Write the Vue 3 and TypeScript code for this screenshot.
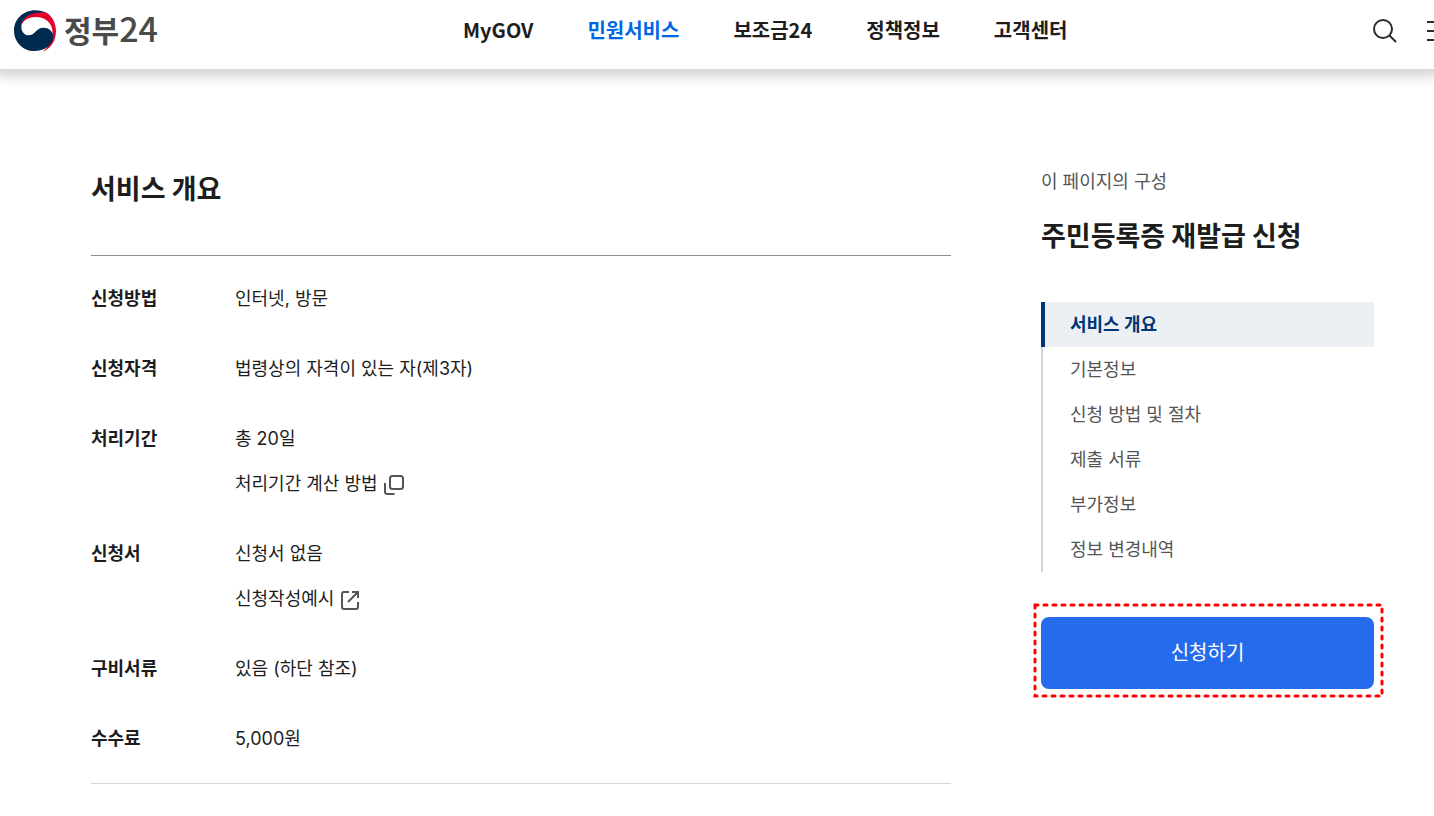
<script setup lang="ts">
interface DetailLink {
  label: string
  icon: 'popup' | 'external'
}

interface Detail {
  term: string
  text: string
  link?: DetailLink
}

const menus: { label: string; current: boolean }[] = [
  { label: 'MyGOV', current: false },
  { label: '민원서비스', current: true },
  { label: '보조금24', current: false },
  { label: '정책정보', current: false },
  { label: '고객센터', current: false },
]

const details: Detail[] = [
  { term: '신청방법', text: '인터넷, 방문' },
  { term: '신청자격', text: '법령상의 자격이 있는 자(제3자)' },
  { term: '처리기간', text: '총 20일', link: { label: '처리기간 계산 방법', icon: 'popup' } },
  { term: '신청서', text: '신청서 없음', link: { label: '신청작성예시', icon: 'external' } },
  { term: '구비서류', text: '있음 (하단 참조)' },
  { term: '수수료', text: '5,000원' },
]

const sections: string[] = ['서비스 개요', '기본정보', '신청 방법 및 절차', '제출 서류', '부가정보', '정보 변경내역']
</script>

<template>
  <div class="page">
    <header class="header">
      <div class="header-inner">
        <a class="logo" href="#">
          <svg class="emblem" viewBox="42 30 126 124" aria-hidden="true">
            <path fill="#e4002b" d="M64 76C66 50 88 34 112 34C120 34 132 36 140 37C158 48 168 70 168 92C168 124 150 146 128 154C146 140 158 120 158 98C158 68 136 50 108 50C88 50 70 58 64 76Z" />
            <path fill="#002b51" d="M140 38C130 33 119 30 105 30C70 30 42 57 42 91C42 125 70 152 102 152C134 152 160 134 160 106C158 92 146 82 130 82C108 82 105 105 86 105C74 105 64 94 64 80C64 56 84 40 112 37C124 36 132 36 140 38Z" />
          </svg>
          <span class="wordmark"><b>정부</b><span class="number">24</span></span>
        </a>
        <nav class="menu" aria-label="주 메뉴">
          <a v-for="menu in menus" :key="menu.label" href="#" :class="{ current: menu.current }">{{ menu.label }}</a>
        </nav>
        <div class="tools">
          <button type="button" aria-label="검색">
            <svg viewBox="0 0 24 24" aria-hidden="true">
              <circle cx="10" cy="10" r="9" />
              <path d="M16.5 16.5L23 23" />
            </svg>
          </button>
          <button type="button" aria-label="전체메뉴">
            <svg viewBox="0 0 24 24" aria-hidden="true">
              <path d="M0 3H24M0 12H24M0 21H24" />
            </svg>
          </button>
        </div>
      </div>
    </header>

    <div class="body">
      <main>
        <h2>서비스 개요</h2>
        <dl class="details">
          <div v-for="detail in details" :key="detail.term" class="row">
            <dt>{{ detail.term }}</dt>
            <dd>
              <span>{{ detail.text }}</span>
              <a v-if="detail.link" href="#" class="more">
                {{ detail.link.label }}
                <svg v-if="detail.link.icon === 'popup'" viewBox="0 0 20 20" aria-hidden="true">
                  <rect x="6" y="1" width="13" height="13" rx="2.5" />
                  <path d="M1 8V16.5Q1 19 3.5 19H10.5" />
                </svg>
                <svg v-else viewBox="0 0 20 20" aria-hidden="true">
                  <path d="M9 2H4Q2 2 2 4V17Q2 19 4 19H16Q18 19 18 17V12M12 2H18V8M18 2L8 12" />
                </svg>
              </a>
            </dd>
          </div>
        </dl>
      </main>

      <aside>
        <p class="caption">이 페이지의 구성</p>
        <h2>주민등록증 재발급 신청</h2>
        <nav class="sections" aria-label="이 페이지의 구성">
          <a v-for="(section, index) in sections" :key="section" href="#" :class="{ current: index === 0 }">{{ section }}</a>
        </nav>
        <div class="apply">
          <button type="button">신청하기</button>
          <svg class="marker" aria-hidden="true">
            <rect width="100%" height="100%" />
          </svg>
        </div>
      </aside>
    </div>
  </div>
</template>

<style>
body {
  margin: 0;
  background: #fff;
}
</style>

<style scoped>
.page {
  color: #1d1d1d;
  font-family: Inter, "Noto Sans CJK KR", sans-serif;
  font-size: 18px;
  line-height: 28px;
}

a {
  color: inherit;
  text-decoration: none;
}

button {
  border: 0;
  padding: 0;
  background: none;
  color: inherit;
  font: inherit;
  cursor: pointer;
}

h2,
p,
dl,
dd {
  margin: 0;
}

h2 {
  font-family: "Noto Sans CJK KR", sans-serif;
  font-size: 27px;
  line-height: 38px;
}

svg {
  display: block;
  flex: none;
}

.header {
  border-bottom: 1px solid #d8d8dc;
  box-shadow: 0 0 12px 6px rgba(0, 0, 0, 0.18);
  font-family: "Noto Sans CJK KR", sans-serif;
}

.header-inner {
  display: flex;
  align-items: center;
  overflow: hidden;
  padding: 0 0 8px 14px;
  height: 61px;
}

.logo {
  display: flex;
  align-items: center;
  gap: 8px;
  flex: 0 0 449px;
  color: #4a4a4a;
  font-size: 30px;
  line-height: 38px;
}

.wordmark {
  padding-bottom: 4px;
}

.logo .number {
  font-size: 34px;
  font-weight: 500;
}

.emblem {
  width: 42px;
  height: 42px;
}

.menu {
  display: flex;
  gap: 54px;
  padding-bottom: 1px;
  font-size: 20px;
  font-weight: 700;
  white-space: nowrap;
}

.menu .current {
  color: #0068e5;
}

.tools {
  display: flex;
  gap: 30px;
  margin-left: auto;
  margin-right: -17px;
}

.tools svg {
  width: 24px;
  height: 24px;
  fill: none;
  stroke: #2b2b2b;
  stroke-width: 2;
}

.body {
  display: grid;
  grid-template-columns: minmax(0, 1fr) 333px;
  gap: 90px;
  padding: 98px 60px 32px 91px;
}

main h2 {
  padding: 1px 0 48px;
  border-bottom: 1px solid #8e8e8e;
}

.details {
  display: grid;
  gap: 42px;
  padding: 29px 0 30px;
  border-bottom: 1px solid #d8d8d8;
}

.row {
  display: grid;
  grid-template-columns: 144px 1fr;
}

dt {
  font-weight: 700;
}

dd {
  display: grid;
  gap: 17px;
  justify-items: start;
}

.more {
  display: flex;
  align-items: center;
  gap: 6px;
}

.more svg {
  margin-top: 2px;
  width: 20px;
  height: 20px;
  fill: none;
  stroke: #555;
  stroke-width: 2;
}

.caption {
  color: #555;
}

aside h2 {
  margin-top: 20px;
}

.sections {
  display: grid;
  margin-top: 48px;
  color: #555;
  line-height: 45px;
}

.sections a {
  padding-left: 27px;
  border-left: 2px solid #cdd7e4;
}

.sections .current {
  padding-left: 25px;
  border-left: 4px solid #003675;
  background: #ecf0f5;
  color: #003675;
  font-weight: 700;
}

.apply {
  position: relative;
  margin-top: 45px;
}

.apply button {
  width: 100%;
  height: 72px;
  border-radius: 8px;
  background: #256cec;
  color: #fff;
  font-size: 20px;
}

.marker {
  position: absolute;
  top: -12px;
  left: -6px;
  width: calc(100% + 14px);
  height: calc(100% + 19px);
  overflow: visible;
  pointer-events: none;
}

.marker rect {
  fill: none;
  stroke: #f00;
  stroke-width: 3;
  stroke-linecap: round;
  stroke-dasharray: 3 6;
}
</style>
